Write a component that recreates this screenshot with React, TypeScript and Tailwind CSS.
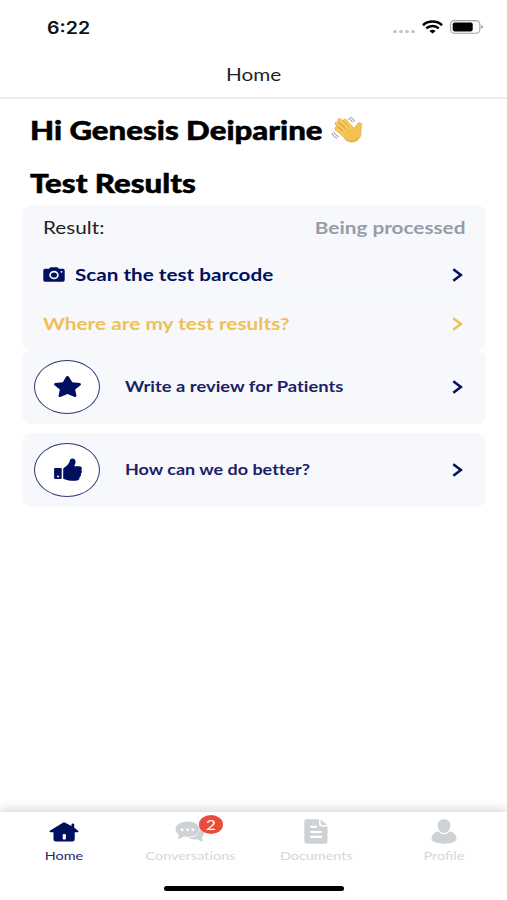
import React from "react";
import { FaStar } from "react-icons/fa";

type IconProps = { className?: string };

function Wifi({ className }: IconProps) {
    return (
        <svg viewBox="0 0 21 14" className={className} fill="none" stroke="#000" strokeWidth="2.6">
            <path d="M1 5.2C6 .3 15 .3 20 5.2" />
            <path d="M4.3 8.4C7.7 5.2 13.3 5.2 16.7 8.4" />
            <path d="M7.4 10.9Q10.5 8.5 13.6 10.9L10.5 13.6Z" fill="#000" stroke="none" />
        </svg>
    );
}

function Battery({ className }: IconProps) {
    return (
        <svg viewBox="0 0 34 14" className={className}>
            <rect x=".6" y=".6" width="29.3" height="12.6" rx="3.8" fill="#fff" stroke="#a3a3a3" strokeWidth="1.1" />
            <rect x="2.7" y="2.5" width="20" height="8.9" rx="1.8" fill="#000" />
            <path d="M31.3 5.2q1.7.3 1.7 1.7t-1.7 1.7z" fill="#8c8c8c" />
        </svg>
    );
}

function Wave({ className }: IconProps) {
    return (
        <svg viewBox="0 0 32 28" className={className} fill="none" strokeLinecap="round" strokeLinejoin="round">
            <path
                d="M11.5 17.5L5.5 12.5M14 15L5.8 7.5M17 12.5L8.5 4.2M20 11.5L14 4.8"
                stroke="#e0a63a"
                strokeWidth="4"
            />
            <path
                d="M9 16L17 9.5L23.5 12L26.5 8C27.2 6.3 29.8 6.3 30.5 8C31 10 29.8 12 30 16C30.3 21 27 25.5 21.5 26C16.5 26 12 21.5 9 16Z"
                fill="#f3c352"
                stroke="#dda23a"
                strokeWidth=".7"
            />
            <path
                d="M12 18L5.5 12.3M14 15L5.8 7.2M17 12.5L8.5 3.9M20 11.5L14 4.5"
                stroke="#f6ca5c"
                strokeWidth="2.9"
            />
            <path d="M12 15L8 11.3M15.2 13L10 8M18.3 11L14 6.6M13.5 23c3 3 9 3.5 13-.5" stroke="#d99b30" strokeWidth=".7" />
            <path d="M17.5 2.700q2.500.8 3.800 3.500M19.500 1.300q2.700 1.200 3.800 4M1.200 17.500q1.500 3.500 4.500 4.700M3 16.500q1.500 2.800 4.200 4" stroke="#8a8a8a" strokeWidth="1" strokeDasharray="1.4 .4" />
        </svg>
    );
}

function Camera({ className }: IconProps) {
    return (
        <svg viewBox="0 0 22 15" className={className} fill="#000f5f">
            <path d="M2 1.7H6L7.2.5Q7.5.2 8 .2H14Q14.5.2 14.8.5L16 1.7H20Q21.7 1.7 21.7 3.4V13Q21.7 14.7 20 14.7H2Q.3 14.7.3 13V3.4Q.3 1.7 2 1.7Z" />
            <ellipse cx="11" cy="8" rx="3.9" ry="3.4" fill="none" stroke="#f6f8fc" strokeWidth="1.7" />
            <ellipse cx="18.5" cy="4.9" rx="1" ry=".8" fill="#f6f8fc" />
        </svg>
    );
}

function ThumbsUp({ className }: IconProps) {
    return (
        <svg viewBox="0 0 28 23" className={className} fill="#000f5f">
            <path d="M1 10H6.8Q7.7 10 7.7 10.8V20.3Q7.7 21.1 6.8 21.1H1Q.1 21.1.1 20.3V10.8Q.1 10 1 10Z" />
            <ellipse cx="4" cy="18.4" rx="1" ry=".9" fill="#fff" />
            <path d="M9.2 11.3Q9.2 10.3 10 9.7C12.5 8 14.8 6.5 15.7 3.3Q16 .5 18.2.5C21.3.5 22.2 3.3 21.2 5.800L20.3 8.2H25.5C27.8 8.2 28.5 10.5 27.3 12C28.3 13.3 27.9 15 26.8 15.8C27.3 17.3 26.6 18.7 25.6 19.2C25.8 21.8 24 22.7 21.5 22.7H17C13.5 22.7 11.8 21.3 9.9 21Q9.2 20.9 9.2 20.2Z" />
        </svg>
    );
}

function Chevron({ className }: IconProps) {
    return (
        <svg viewBox="0 0 11 14" className={className} fill="none" stroke="currentColor" strokeWidth="2.5">
            <path d="M1.3 1.2L8.9 7L1.3 12.8" />
        </svg>
    );
}

function HomeIcon({ className }: IconProps) {
    return (
        <svg viewBox="0 0 30 20" className={className} fill="#000f5f">
            <path d="M14.3.5Q15 0 15.7.5L22.5 4V2.3Q22.5 1.5 23.8 1.5T25.2 2.3V5.5L29.3 9Q30 10 28.8 10.2H25.7V17.5Q25.7 19.5 23.5 19.5H6.8Q4.5 19.5 4.5 17.5V10.2H1.3Q0 10 .8 8.8Z" />
            <rect x="13.7" y="12" width="3.2" height="5.5" rx="1" fill="#fff" />
        </svg>
    );
}

function ChatIcon({ className }: IconProps) {
    return (
        <svg viewBox="0 0 30 22" className={className} fill="#cdd2d6">
            <path d="M28 8Q31 13 27 16Q27 18.5 28.3 20.5Q24 20 22.5 18.3Q16 19 13.5 16.6Q23.5 16.5 25 8.5Z" />
            <path d="M12.5.5C19 .5 24.5 3.7 24.5 8.2S19 15.8 12.5 15.8Q10.5 15.8 8.5 15.4Q6 17.8 2.5 18Q4 16 4 13.7Q.5 11.6.5 8.2C.5 3.7 6 .5 12.5 .5Z" />
            <g fill="#fff">
                <ellipse cx="7" cy="8.7" rx="1.5" ry="1.2" />
                <ellipse cx="12.5" cy="8.7" rx="1.5" ry="1.2" />
                <ellipse cx="18" cy="8.7" rx="1.5" ry="1.2" />
            </g>
        </svg>
    );
}

function DocumentIcon({ className }: IconProps) {
    return (
        <svg viewBox="0 0 24 25" className={className} fill="#cdd2d6">
            <path d="M2.5.3H15V5Q15 7.5 18 7.5H23.5V22.5Q23.5 24.7 21.3 24.7H2.5Q.3 24.7.3 22.5V2.5Q.3.3 2.5.3Z" />
            <path d="M16.7.5L23.3 5.9H18.5Q16.7 5.9 16.7 4.3Z" />
            <path d="M7 7.8H12M7 13H17M7 17.8H17" stroke="#fff" strokeWidth="2.2" strokeLinecap="round" />
        </svg>
    );
}

function ProfileIcon({ className }: IconProps) {
    return (
        <svg viewBox="0 0 26 25" className={className} fill="#cdd2d6">
            <path d="M13 .3C17 .3 19.3 2.7 19.3 6.3C19.3 10.3 17 14 13 14S6.7 10.3 6.7 6.3C6.7 2.7 9 .3 13 .3Z" />
            <path d="M7.3 12.3Q9.5 15.3 13 15.3T18.7 12.3Q25.5 14 25.5 20C25.5 23 19 24.7 13 24.7S.5 23 .5 20Q.5 14 7.3 12.3Z" />
        </svg>
    );
}

function StatusBar() {
    return (
        <div className="flex h-[54px] items-center justify-between pl-[47px] pr-[23px]">
            <span className="mt-[2px] origin-left scale-x-[1.15] font-['Inter'] text-[17px] font-semibold leading-none text-[#111111]">6:22</span>
            <div className="flex items-center">
                <div className="mr-[7px] mt-2 flex gap-[2px]">
                    {[0, 1, 2, 3].map((dot) => (
                        <i key={dot} className="h-[3px] w-1 rounded-full bg-[#c4c4c4]" />
                    ))}
                </div>
                <Wifi className="mr-[7px] h-[14px] w-[21px]" />
                <Battery className="h-[14px] w-[34px]" />
            </div>
        </div>
    );
}

function ActionCard({ icon, label }: { icon: React.ReactNode; label: React.ReactNode }) {
    return (
        <button className="flex h-[74px] w-full items-center rounded-[9px] bg-[#f6f8fc] pb-px pl-3 pr-[23px] text-[#000f5f]">
            <span className="flex h-[54px] w-[66px] items-center justify-center rounded-[50%] border border-[#2f3475] bg-white">
                {icon}
            </span>
            <span className="ml-[25px] text-[15px] font-bold text-[#1c1f66]">{label}</span>
            <Chevron className="ml-auto h-[14px] w-[11px]" />
        </button>
    );
}

const tabs = [
    { label: "Home", icon: <HomeIcon className="h-5 w-[30px]" />, color: "left-px text-[#25286c]" },
    { label: "Conversations", icon: <ChatIcon className="h-[22px] w-[30px]" />, color: "text-[#d4d7da]", badge: 2 },
    { label: "Documents", icon: <DocumentIcon className="h-[25px] w-6" />, color: "-left-px text-[#d4d7da]" },
    { label: "Profile", icon: <ProfileIcon className="h-[25px] w-[26px]" />, color: "text-[#d4d7da] [font-variant-ligatures:normal]" },
];

function TabBar() {
    return (
        <nav className="mt-auto h-[88px] bg-white shadow-[0_-3px_9px_rgba(0,0,0,0.15)]">
            <div className="grid h-[74px] grid-cols-4">
                {tabs.map((tab) => (
                    <div key={tab.label} className={`relative flex flex-col items-center pt-[6px] ${tab.color}`}>
                        <div className="flex h-[27px] items-center">{tab.icon}</div>
                        <span className="mt-[3px] scale-x-[1.2] text-[12px] leading-[15px]">{tab.label}</span>
                        {tab.badge && (
                            <span className="absolute left-[72px] top-[3px] flex h-[19px] w-6 items-center justify-center rounded-[50%] bg-[#ea4c3b] text-[14px] leading-none text-white">
                                <span className="scale-x-[1.22]">{tab.badge}</span>
                            </span>
                        )}
                    </div>
                ))}
            </div>
            <div className="ml-[164px] h-[5px] w-[180px] rounded-full bg-black" />
        </nav>
    );
}

function App() {
    return (
        <div className="flex h-[900px] w-[507px] flex-col overflow-hidden bg-white font-['Lato',sans-serif] text-black [font-variant-ligatures:no-common-ligatures]">
            <StatusBar />
            <header className="flex h-[45px] items-center justify-center border-b-2 border-[#eeeeee] pb-[2px]">
                <h1 className="scale-x-[1.22] text-[17px] leading-none text-[#1f1f1f]">Home</h1>
            </header>

            <main className="px-[22px]">
                <div className="flex h-[62px] items-center pl-2">
                    <h2 className="w-[301px] shrink-0 whitespace-nowrap">
                        <span className="inline-block origin-left scale-x-[1.2] text-[26px] font-black [-webkit-text-stroke:0.5px_black]">Hi Genesis Deiparine</span>
                    </h2>
                    <Wave className="h-7 w-8" />
                </div>
                <div className="flex h-[44px] items-center pl-2">
                    <h2 className="origin-left scale-x-[1.2] text-[26px] font-black [-webkit-text-stroke:0.5px_black]">Test Results</h2>
                </div>

                <section className="mr-[-1px] h-[145px] rounded-[9px] bg-[#f6f8fc] px-[21px] text-[17px] font-bold">
                    <div className="flex h-[46px] items-center justify-between">
                        <span className="origin-left scale-x-[1.22] font-normal text-[#1f1f1f]">Result:</span>
                        <span className="origin-right scale-x-[1.22] text-[#989ca8]">Being processed</span>
                    </div>
                    <div className="flex h-12 items-center border-b border-[#f1f4f8] pr-[2px] text-[#000f5f]">
                        <Camera className="h-[15px] w-[22px]" />
                        <span className="ml-[10px] origin-left scale-x-[1.215]">Scan the test barcode</span>
                        <Chevron className="ml-auto h-[14px] w-[11px]" />
                    </div>
                    <div className="flex h-[50px] items-center justify-between pr-[2px] text-[#efc057]">
                        <span className="origin-left scale-x-[1.225]">Where are my test results?</span>
                        <Chevron className="h-[14px] w-[11px]" />
                    </div>
                </section>

                <div className="mr-[-1px] flex flex-col gap-[9px]">
                    <ActionCard
                        icon={<FaStar preserveAspectRatio="none" className="h-[21px] w-[29px]" />}
                        label={<span className="inline-block origin-left scale-x-[1.225]">Write a review for Patients</span>}
                    />
                    <ActionCard
                        icon={<ThumbsUp className="ml-[2px] h-[23px] w-[28px]" />}
                        label={<span className="inline-block origin-left scale-x-[1.2]">How can we do better?</span>}
                    />
                </div>
            </main>

            <TabBar />
        </div>
    );
}

export default App;
